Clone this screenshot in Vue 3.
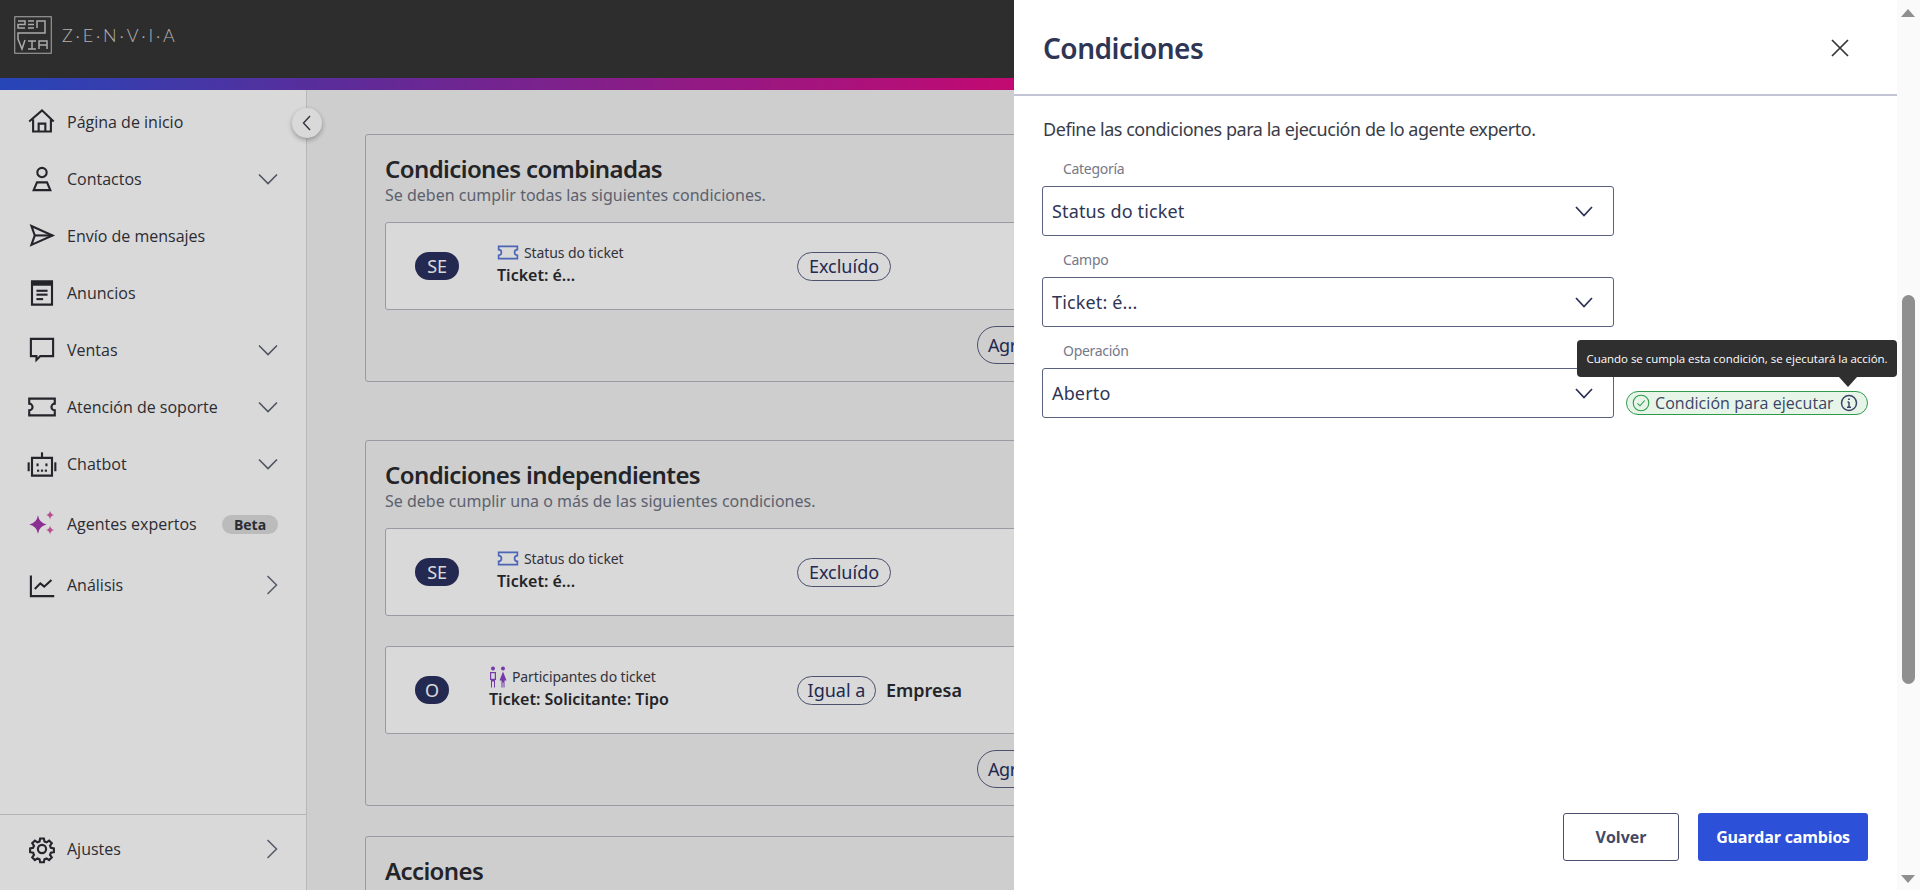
<script setup>
const nav = [
  { label: 'Página de inicio', size: 'n', paths: ['M2 13 13.500 3l10.500 10', 'M5.500 11v11h16V11', 'M10.500 22v-7h6v7'] },
  { label: 'Contactos', chevron: 'down', size: 'n', paths: ['M13.500 3.500a4.200 4.200 0 1 1 0 8.400a4.200 4.200 0 0 1 0-8.400z', 'M9 16.500h9l3 7H6z'] },
  { label: 'Envío de mensajes', size: 'n', paths: ['M4 4.500 23 13 4 21.500 7 13z', 'M7 13h16'] },
  { label: 'Anuncios', size: 'n', paths: ['M4.500 3h18v21h-18z', 'M4.500 4.500h18', 'M4.500 6h18', 'M8.500 11.500h10', 'M8.500 15h10', 'M8.500 19h6'] },
  { label: 'Ventas', chevron: 'down', size: 'n', paths: ['M3.500 3.500h20v15.500H12l-3.500 3.500v-3.500h-5z'] },
  { label: 'Atención de soporte', chevron: 'down', size: 'n', paths: ['M2 6h23v4.500a3 3 0 0 0 0 6V21H2v-4.500a3 3 0 0 0 0-6z'] },
  { label: 'Chatbot', chevron: 'down', size: 'n', paths: ['M4.500 8h18v16h-18z', 'M13.500 8V3', 'M1.500 12v8', 'M25.500 12v8', 'M9.500 13v2.500', 'M17.500 13v2.500', 'M9 19.500h2', 'M12.500 19.500h2', 'M16 19.500h2'] },
  { label: 'Agentes expertos', badge: 'Beta', size: 'l', sparkle: true },
  { label: 'Análisis', chevron: 'right', size: 'm', paths: ['M3.500 5v18.500h21', 'M7 17l5-5 3.500 3 6.500-6'] },
]
const settings = 'M10.300 2.500h3.400l.5 2.700 1.900.8 2.300-1.600 2.400 2.400-1.600 2.300.8 1.900 2.700.5v3.400l-2.700.5-.8 1.900 1.600 2.300-2.400 2.400-2.300-1.600-1.900.8-.5 2.700h-3.400l-.5-2.700-1.900-.8-2.300 1.600-2.400-2.400 1.600-2.300-.8-1.900-2.700-.5v-3.400l2.700-.5.8-1.900-1.600-2.300 2.400-2.400 2.300 1.600 1.900-.8z'
const independent = [
  { op: 'SE', kind: 'ticket', group: 'Status do ticket', field: 'Ticket: é...', cmp: 'Excluído' },
  { op: 'O', kind: 'people', group: 'Participantes do ticket', field: 'Ticket: Solicitante: Tipo', cmp: 'Igual a', value: 'Empresa' },
]
const combined = [independent[0]]
const selects = [
  { label: 'Categoría', value: 'Status do ticket' },
  { label: 'Campo', value: 'Ticket: é...' },
  { label: 'Operación', value: 'Aberto' },
]
const sections = [
  { title: 'Condiciones combinadas', sub: 'Se deben cumplir todas las siguientes condiciones.', rows: combined },
  { title: 'Condiciones independientes', sub: 'Se debe cumplir una o más de las siguientes condiciones.', rows: independent },
]
</script>

<template>
  <div class="app">
    <header class="topbar">
      <div class="brand">
        <svg class="logo" viewBox="0 0 38 38" fill="none" stroke="#c9c9c9" stroke-width="1.500">
          <rect x=".75" y=".75" width="36.500" height="36.500" stroke-width="1" />
          <path d="M4 5h7v3.500H4v3.500h7" />
          <path d="M14 5h6M14 8.500h6M14 12h6" />
          <path d="M23 12V5h8v12H4v6l4 10 3-9" />
          <path d="M14 25h8M18 25v8M14 33h8" />
          <path d="M25 33v-8h8v8M25 29h8" />
        </svg>
        <span class="wordmark">Z·E·N·V·I·A</span>
      </div>
    </header>
    <div class="rainbow"></div>

    <div class="workspace">
      <aside class="sidebar">
        <nav class="nav">
          <a v-for="item in nav" :key="item.label" class="nav-item" :class="'h-' + item.size">
            <svg v-if="item.sparkle" class="nav-icon" viewBox="0 0 26 26">
              <path fill="#a536ad" d="M9.500 5.500Q10.500 12 17 13.500 10.500 15 9.500 21.500 8.500 15 2 13.500 8.500 12 9.500 5.500z" />
              <path fill="#d75cab" d="M20 1.500Q20.500 4.500 23.500 5.300 20.500 6 20 9 19.500 6 16.500 5.300 19.500 4.500 20 1.500z" />
              <path fill="#d75cab" d="M20 14.500Q20.500 17.500 23.500 18.300 20.500 19 20 22 19.500 19 16.500 18.300 19.500 17.500 20 14.500z" />
            </svg>
            <svg v-else class="nav-icon" viewBox="0 0 27 27" fill="none" stroke="#2b2b33" stroke-width="1.900">
              <path v-for="d in item.paths" :key="d" :d="d" />
            </svg>
            <span class="nav-label">{{ item.label }}</span>
            <span v-if="item.badge" class="beta">{{ item.badge }}</span>
            <svg v-if="item.chevron === 'down'" class="chev" viewBox="0 0 20 12" fill="none" stroke="#5f6373" stroke-width="1.600"><path d="M1 1.500 10 10.500 19 1.500" /></svg>
            <svg v-if="item.chevron === 'right'" class="chev-r" viewBox="0 0 12 20" fill="none" stroke="#6a6e80" stroke-width="1.600"><path d="M1.500 1 10.500 10 1.500 19" /></svg>
          </a>
        </nav>
        <div class="nav-foot">
          <a class="nav-item">
            <svg class="nav-icon" viewBox="0 0 27 27" fill="none" stroke="#2b2b33" stroke-width="1.900">
              <path :d="settings" transform="translate(1.500 1.500)" />
              <circle cx="13.500" cy="13.500" r="3.700" />
            </svg>
            <span class="nav-label">Ajustes</span>
            <svg class="chev-r" viewBox="0 0 12 20" fill="none" stroke="#6a6e80" stroke-width="1.600"><path d="M1.500 1 10.500 10 1.500 19" /></svg>
          </a>
        </div>
        <button class="collapse" aria-label="Contraer">
          <svg viewBox="0 0 10 16" fill="none" stroke="#3a3d4a" stroke-width="1.400"><path d="M8 1 1.500 8 8 15" /></svg>
        </button>
      </aside>

      <main class="main">
        <section v-for="sec in sections" :key="sec.title" class="card">
          <h2>{{ sec.title }}</h2>
          <p class="sub">{{ sec.sub }}</p>
          <div class="rows">
            <div v-for="row in sec.rows" :key="row.op" class="row">
              <div class="row-left">
                <span class="op" :class="{ wide: row.op === 'SE' }">{{ row.op }}</span>
                <div class="cond">
                  <div class="cond-group">
                    <svg v-if="row.kind === 'ticket'" class="mini-ticket" viewBox="0 0 22 16" fill="none" stroke="#5a77d8" stroke-width="1.800"><path d="M1 1.500h20v3.500a3 3 0 0 0 0 6v3.500H1V11a3 3 0 0 0 0-6z" /></svg>
                    <svg v-else class="mini-people" viewBox="0 0 18 22" fill="#8a45c8">
                      <circle cx="4" cy="2.500" r="2" /><circle cx="14" cy="2.500" r="2" />
                      <path d="M1 6h6v8H6v7.500H5v-6H3v6H2V14H1zM2.200 7.200v5.600h3.600V7.200z" />
                      <path d="M14 5.500l3.500 9H15.500v7H14.500v-5h-1v5h-1v-7h-2z" />
                    </svg>
                    <span>{{ row.group }}</span>
                  </div>
                  <div class="cond-field">{{ row.field }}</div>
                </div>
              </div>
              <div class="row-right">
                <span class="cmp">{{ row.cmp }}</span>
                <strong v-if="row.value" class="val">{{ row.value }}</strong>
              </div>
            </div>
          </div>
          <div class="add-wrap"><button class="add">Agregar condición</button></div>
        </section>
        <section class="card">
          <h2>Acciones</h2>
        </section>
      </main>
    </div>

    <div class="scrim"></div>

    <aside class="drawer">
      <div class="drawer-col">
        <div class="drawer-head">
          <h1>Condiciones</h1>
          <svg class="close" viewBox="0 0 18 18" fill="none" stroke="#333" stroke-width="1.700"><path d="M1 1 17 17M17 1 1 17" /></svg>
        </div>
        <div class="drawer-body">
          <p class="intro">Define las condiciones para la ejecución de lo agente experto.</p>
          <div v-for="(f, i) in selects" :key="f.label" class="field">
            <label>{{ f.label }}</label>
            <div class="field-line">
              <div class="select">
                <span>{{ f.value }}</span>
                <svg viewBox="0 0 18 11" fill="none" stroke="#2a3055" stroke-width="1.700"><path d="M1 1 9 9.500 17 1" /></svg>
              </div>
              <div v-if="i === 2" class="status">
                <svg class="ok" viewBox="0 0 18 18" fill="none" stroke="#2f9a4c" stroke-width="1.100"><circle cx="9" cy="9" r="7.800" /><path d="M5.500 9.300 8 11.800 12.700 6.500" /></svg>
                <span>Condición para ejecutar</span>
                <svg class="info" viewBox="0 0 18 18" fill="none" stroke="#3b4366" stroke-width="1.500"><circle cx="9" cy="9" r="7.500" /><path d="M9 8v5M7 13.200h4M7.500 8H9" /><path d="M9 4.600v1.400" stroke-width="1.800" /></svg>
                <div class="tip">Cuando se cumpla esta condición, se ejecutará la acción.</div>
              </div>
            </div>
          </div>
        </div>
        <div class="drawer-foot">
          <button class="btn ghost">Volver</button>
          <button class="btn primary">Guardar cambios</button>
        </div>
      </div>
      <div class="scroll">
        <span class="arrow up"></span>
        <span class="thumb"></span>
        <span class="arrow down"></span>
      </div>
    </aside>
  </div>
</template>

<style>
html, body { margin: 0; background: #fff; }
</style>

<style scoped>
* { box-sizing: border-box; }
.app {
  position: relative;
  width: 1920px;
  height: 890px;
  overflow: hidden;
  display: flex;
  flex-direction: column;
  background: #f2f2f2;
  font-family: "Open Sans", "Noto Sans", sans-serif;
  color: #2d2d35;
}
.topbar { height: 78px; background: #353535; display: flex; padding: 16px 0 0 14px; flex: none; }
.brand { display: flex; align-items: flex-start; gap: 10px; }
.logo { width: 38px; height: 38px; }
.wordmark { font-family: Lato, sans-serif; color: #d0d0d0; font-size: 18px; letter-spacing: 2.800px; line-height: 38px; font-weight: 300; }
.rainbow { height: 12px; flex: none; background: linear-gradient(90deg, #2d52d8 0, #6d34b4 340px, #e50c86 1014px); }
.workspace { flex: 1; display: flex; min-height: 0; }

.sidebar {
  position: relative;
  width: 307px;
  flex: none;
  background: #fff;
  border-right: 1px solid #d8d8d8;
  display: flex;
  flex-direction: column;
}
.nav { padding-top: 3px; flex: 1; }
.nav-item { display: flex; align-items: center; height: 57px; padding: 0 28px 0 30px; }
.nav-item.h-l { height: 64px; }
.nav-item.h-m { height: 58px; }
.nav-icon { width: 30px; height: 30px; flex: none; margin-right: 10px; margin-left: -3px; }
.nav-label { font-size: 16px; line-height: 20px; flex: 1; color: #33343c; }
.chev { width: 20px; height: 12px; flex: none; }
.chev-r { width: 12px; height: 20px; flex: none; }
.beta { background: #dcdcdc; border-radius: 10px; font-size: 14px; font-weight: 700; height: 19px; line-height: 19px; width: 56px; text-align: center; color: #33343c; margin-left: -6px; }
.nav-foot { border-top: 1px solid #d4d4d4; height: 76px; padding: 5px 0 0; flex: none; }
.collapse {
  position: absolute;
  top: 18px;
  left: 292px;
  width: 30px;
  height: 30px;
  border-radius: 50%;
  border: 0;
  padding: 0;
  background: #fff;
  box-shadow: 0 2px 5px rgba(0,0,0,.3);
  display: flex;
  align-items: center;
  justify-content: center;
}
.collapse svg { width: 10px; height: 16px; }

.main { flex: 1; min-width: 0; overflow: hidden; padding: 44px 0 0 58px; display: flex; flex-direction: column; gap: 58px; }
.card { width: 798px; border: 1px solid #b3b6c2; border-radius: 3px; padding: 19px 20px 0 19px; flex: none; font-family: "Noto Sans", sans-serif; }
.card:first-child { height: 248px; }
.card:nth-child(2) { height: 366px; }
.card:last-child { margin-top: -28px; height: 200px; }
h2 { margin: 0; font-size: 24px; line-height: 30px; font-weight: 600; color: #2b2b30; letter-spacing: -.6px; }
.sub { margin: 1px 0 0; font-size: 16px; line-height: 20px; color: #6e7283; }
.rows { margin-top: 17px; display: flex; flex-direction: column; gap: 30px; }
.row { height: 88px; background: #fff; border: 1px solid #b3b6c2; border-radius: 3px; display: flex; align-items: center; padding-left: 29px; }
.row-left { width: 382px; display: flex; align-items: center; flex: none; }
.op { background: #2a3160; color: #fff; font-size: 18px; line-height: 28px; height: 28px; width: 34px; border-radius: 14px; text-align: center; margin-right: 40px; letter-spacing: -.3px; flex: none; }
.op.wide { width: 44px; margin-right: 38px; }
.cond { margin-top: -5px; }
.cond-group { display: flex; align-items: center; gap: 5px; font-size: 14px; line-height: 18px; color: #3a3c48; letter-spacing: -.1px; height: 20px; }
.mini-ticket { width: 22px; height: 15px; }
.mini-people { width: 18px; height: 22px; }
.cond-field { font-size: 16px; line-height: 20px; font-weight: 600; color: #2b2b30; letter-spacing: 0; margin-top: 2px; }
.row-right { display: flex; align-items: center; gap: 10px; }
.cmp { border: 1px solid #5a6080; border-radius: 15px; height: 29px; line-height: 27px; min-width: 79px; padding: 0 9px; font-size: 18px; color: #2a3160; text-align: center; }
.row-right .cmp:only-child { min-width: 94px; }
.val { font-size: 18px; font-weight: 600; color: #2b2b30; }
.add-wrap { display: flex; justify-content: flex-end; margin-top: 16px; }
.add { height: 38px; border: 1px solid #5a6080; border-radius: 19px; background: transparent; font: 18px "Noto Sans", sans-serif; color: #2a3160; padding: 0 10px; width: 165px; letter-spacing: -.4px; white-space: nowrap; text-align: left; }

.scrim { position: absolute; inset: 0; background: rgba(0,0,0,.15); }

.drawer { position: absolute; top: 0; right: 0; bottom: 0; width: 906px; background: #fff; display: flex; }
.drawer-col { flex: 1; display: flex; flex-direction: column; min-width: 0; font-family: "Noto Sans", sans-serif; }
.drawer-head { height: 96px; flex: none; border-bottom: 2px solid #c3c4d6; display: flex; align-items: center; justify-content: space-between; padding: 0 48px 0 29px; }
h1 { margin: 2px 0 0; font-size: 28px; line-height: 36px; font-weight: 600; color: #2e3555; letter-spacing: -.5px; }
.close { width: 18px; height: 18px; margin-top: 2px; }
.drawer-body { flex: 1; padding: 21px 0 0 29px; }
.intro { margin: 0; font-size: 18px; line-height: 24px; color: #3a3c48; letter-spacing: -.45px; }
.field { margin-top: 15px; }
.field:nth-child(2) { margin-top: 19px; }
.field label { display: block; padding-left: 20px; font-size: 14px; line-height: 18px; color: #767888; letter-spacing: -.3px; margin-bottom: 8px; }
.field-line { display: flex; align-items: flex-start; margin-left: -1px; }
.select { width: 572px; height: 50px; border: 1px solid #5a6080; border-radius: 3px; display: flex; align-items: center; justify-content: space-between; padding: 0 20px 0 9px; font-size: 18px; color: #2e3555; letter-spacing: .15px; flex: none; }
.select svg { width: 18px; height: 11px; }
.status {
  position: relative;
  margin: 23px 0 0 12px;
  width: 242px;
  height: 24px;
  border: 1px solid #2f9a4c;
  border-radius: 12px;
  background: #e7f5e9;
  display: flex;
  align-items: center;
  padding: 0 9px 0 5px;
  gap: 5px;
  font-family: "Open Sans", sans-serif;
  font-size: 16px;
  color: #3b4366;
  white-space: nowrap;
}
.status span { flex: 1; letter-spacing: .05px; }
.ok { width: 18px; height: 18px; flex: none; }
.info { width: 18px; height: 18px; flex: none; }
.tip {
  position: absolute;
  bottom: 37px;
  right: -30px;
  width: 320px;
  height: 37px;
  background: #2f2f2f;
  color: #fff;
  border-radius: 4px;
  font-size: 11.500px;
  line-height: 37px;
  text-align: center;
  letter-spacing: -.03px;
}
.tip::after {
  content: "";
  position: absolute;
  left: 262px;
  top: 37px;
  border-left: 9px solid transparent;
  border-right: 9px solid transparent;
  border-top: 10px solid #2f2f2f;
}
.drawer-foot { flex: none; display: flex; justify-content: flex-end; gap: 19px; padding: 0 29px 0 0; margin-bottom: 29px; height: 48px; }
.btn { height: 48px; border-radius: 3px; font: 700 16px "Open Sans", sans-serif; }
.ghost { width: 116px; background: #fff; border: 1px solid #4a5070; color: #444a65; }
.primary { width: 170px; background: #2d50d8; border: 0; color: #fff; letter-spacing: -.2px; }

.scroll { width: 23px; flex: none; background: #fafafa; position: relative; }
.thumb { position: absolute; left: 5px; top: 295px; width: 13px; height: 389px; background: #8f8f8f; border-radius: 7px; }
.arrow { position: absolute; left: 4px; width: 0; height: 0; border-left: 7.500px solid transparent; border-right: 7.500px solid transparent; }
.up { top: 9px; border-bottom: 8px solid #8f8f8f; }
.down { top: 875px; border-top: 8px solid #8f8f8f; }
</style>
